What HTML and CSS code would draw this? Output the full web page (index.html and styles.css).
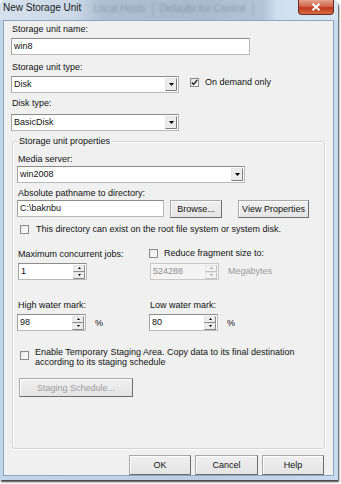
FILE: index.html
```html
<!DOCTYPE html>
<html>
<head>
<meta charset="utf-8">
<link rel="stylesheet" href="styles.css">
</head>
<body>
<div class="window">
  <div class="titlebar">
    <span class="title">New Storage Unit</span>
    <span class="ghost">
      <span class="ghost-tab">Local Hosts</span>
      <span class="ghost-tab">Defaults for Central</span>
    </span>
    <span class="close">
      <svg width="10" height="8" viewBox="0 0 10 8"><path d="M1.5 0.8 L8.5 7.2 M8.5 0.8 L1.5 7.2" stroke="#fff" stroke-width="2"/></svg>
    </span>
  </div>
  <div class="client">
    <div class="lbl l-name">Storage unit name:</div>
    <div class="input in-name">win8</div>
    <div class="lbl l-type">Storage unit type:</div>
    <div class="row r-type">
      <div class="combo cb-type"><span class="val">Disk</span><span class="drop"><svg width="5" height="3" viewBox="0 0 5 3"><path d="M0 0H5L2.5 3Z" fill="#000"/></svg></span></div>
      <div class="check c-demand"><span class="box"><svg width="7" height="7" viewBox="0 0 7 7"><path d="M0.8 3.4 L2.7 5.4 L6.2 1" stroke="#222" stroke-width="1.4" fill="none"/></svg></span><span>On demand only</span></div>
    </div>
    <div class="lbl l-disk">Disk type:</div>
    <div class="combo cb-disk"><span class="val">BasicDisk</span><span class="drop"><svg width="5" height="3" viewBox="0 0 5 3"><path d="M0 0H5L2.5 3Z" fill="#000"/></svg></span></div>

    <div class="group">
      <span class="legend">Storage unit properties</span>
      <div class="lbl g-media">Media server:</div>
      <div class="combo cb-media"><span class="val">win2008</span><span class="drop"><svg width="5" height="3" viewBox="0 0 5 3"><path d="M0 0H5L2.5 3Z" fill="#000"/></svg></span></div>
      <div class="lbl g-path">Absolute pathname to directory:</div>
      <div class="row r-path">
        <div class="input in-path">C:\baknbu</div>
        <div class="btn b-browse">Browse...</div>
        <div class="btn b-view">View Properties</div>
      </div>
      <div class="check c-root"><span class="box"></span><span>This directory can exist on the root file system or system disk.</span></div>

      <div class="grid g-jobs">
        <div class="lbl">Maximum concurrent jobs:</div>
        <div class="check c-frag"><span class="box"></span><span>Reduce fragment size to:</span></div>
        <div class="spin"><span class="val">1</span><span class="arrows"><span class="ar"><svg width="3" height="2" viewBox="0 0 3 2"><path d="M0 2H3L1.5 0Z" fill="#000"/></svg></span><span class="ar"><svg width="3" height="2" viewBox="0 0 3 2"><path d="M0 0H3L1.5 2Z" fill="#000"/></svg></span></span></div>
        <div class="spin-row"><div class="spin disabled"><span class="val">524288</span><span class="arrows"><span class="ar"><svg width="3" height="2" viewBox="0 0 3 2"><path d="M0 2H3L1.5 0Z" fill="#a0a0a0"/></svg></span><span class="ar"><svg width="3" height="2" viewBox="0 0 3 2"><path d="M0 0H3L1.5 2Z" fill="#a0a0a0"/></svg></span></span></div><span class="unit dim">Megabytes</span></div>
      </div>

      <div class="grid g-water">
        <div class="lbl">High water mark:</div>
        <div class="lbl">Low water mark:</div>
        <div class="spin-row"><div class="spin"><span class="val">98</span><span class="arrows"><span class="ar"><svg width="3" height="2" viewBox="0 0 3 2"><path d="M0 2H3L1.5 0Z" fill="#000"/></svg></span><span class="ar"><svg width="3" height="2" viewBox="0 0 3 2"><path d="M0 0H3L1.5 2Z" fill="#000"/></svg></span></span></div><span class="unit pct">%</span></div>
        <div class="spin-row"><div class="spin"><span class="val">80</span><span class="arrows"><span class="ar"><svg width="3" height="2" viewBox="0 0 3 2"><path d="M0 2H3L1.5 0Z" fill="#000"/></svg></span><span class="ar"><svg width="3" height="2" viewBox="0 0 3 2"><path d="M0 0H3L1.5 2Z" fill="#000"/></svg></span></span></div><span class="unit pct">%</span></div>
      </div>

      <div class="check c-stage"><span class="box"></span><span>Enable Temporary Staging Area. Copy data to its final destination according to its staging schedule</span></div>
      <div class="btn b-stage disabled">Staging Schedule...</div>
    </div>

    <div class="actions">
      <div class="btn b-ok">OK</div>
      <div class="btn b-cancel">Cancel</div>
      <div class="btn b-help">Help</div>
    </div>
  </div>
</div>
</body>
</html>
```
FILE: styles.css
```css
html, body {
  margin: 0;
  padding: 0;
  background: #ffffff;
}
body {
  width: 341px;
  height: 484px;
  overflow: hidden;
  font-family: "Liberation Sans", Arial, sans-serif;
  font-size: 9px;
  color: #111;
}
.window {
  width: 338px;
  height: 480px;
  box-sizing: border-box;
  background: linear-gradient(90deg, #c2d4e8 0%, #bccfe3 60%, #c9dbee 100%);
  box-shadow: 1px 2px 2px rgba(0,0,0,0.75);
  display: flex;
  flex-direction: column;
  border-radius: 5px 5px 0 0;
}
.titlebar {
  height: 20px;
  display: flex;
  align-items: flex-start;
  padding-left: 3px;
  background: linear-gradient(90deg, #d5e1ee 0%, #cad8e7 22%, #aebfd2 30%, #a9bbcf 60%, #b3c5d9 78%, #cfdfef 82%, #d8e6f3 100%);
  border-radius: 5px 5px 0 0;
  flex-shrink: 0;
}
.title {
  font-size: 10px;
  line-height: 10px;
  margin-top: 3px;
  color: #1b1b1b;
  white-space: nowrap;
}
.ghost {
  display: flex;
  margin-left: 6px;
  margin-top: 2px;
  filter: blur(1.2px);
  opacity: 0.45;
}
.ghost-tab {
  font-size: 10px;
  line-height: 14px;
  color: #5c6f88;
  padding: 0 6px;
  border-right: 2px solid #8fa3ba;
  white-space: nowrap;
}
.close {
  margin-left: auto;
  margin-right: 4px;
  width: 36px;
  height: 15px;
  box-sizing: border-box;
  border: 1px solid #6b2b22;
  border-top: none;
  border-radius: 0 0 4px 4px;
  background: linear-gradient(#e3a48e 0%, #d2664c 45%, #c1391d 55%, #d36c45 100%);
  display: flex;
  align-items: center;
  justify-content: center;
}
.client {
  margin: 0 4px 0 3px;
  height: 456px;
  box-sizing: border-box;
  border: 1px solid #8fa4bd;
  background: #f0f0f0;
  padding: 0 9px 0 7px;
  display: flex;
  flex-direction: column;
  align-items: flex-start;
}
.lbl {
  height: 11px;
  line-height: 11px;
  white-space: nowrap;
  margin-left: 1px;
}
.l-name { margin-top: 3px; }
.in-name { margin-top: 3px; width: 239px; }
.l-type { margin-top: 7px; }
.r-type { margin-top: 3px; }
.l-disk { margin-top: 5px; }
.cb-disk { margin-top: 5px; }

.row {
  display: flex;
  align-items: flex-start;
}
.input, .combo, .spin {
  height: 17px;
  box-sizing: border-box;
  border: 1px solid #b9b9b9;
  border-top-color: #8c8c8c;
  border-left-color: #a3a3a3;
  background: #fff;
  line-height: 15px;
  padding-left: 2px;
  white-space: nowrap;
}
.combo {
  display: flex;
  align-items: center;
  justify-content: space-between;
  padding-right: 1px;
}
.combo .val, .spin .val { line-height: 15px; }
.drop {
  width: 12px;
  height: 13px;
  box-sizing: border-box;
  border: 1px solid #e6e6e6;
  border-right-color: #7d7d7d;
  border-bottom-color: #7d7d7d;
  background: #ececec;
  display: flex;
  align-items: center;
  justify-content: center;
}
.cb-type { width: 168px; }
.cb-disk { width: 168px; }
.check {
  display: flex;
  align-items: center;
  white-space: nowrap;
  line-height: 11px;
}
.box {
  width: 9px;
  height: 9px;
  box-sizing: border-box;
  border: 1px solid #8a8a8a;
  background: linear-gradient(135deg, #e6e6e6, #ffffff);
  display: flex;
  align-items: center;
  justify-content: center;
  flex-shrink: 0;
  margin-right: 6px;
}
.c-demand {
  margin-left: 11px;
  margin-top: 1px;
}
.c-demand .box { margin-right: 6px; }

.group {
  position: relative;
  margin-top: 10px;
  margin-left: 1px;
  width: 313px;
  height: 308px;
  box-sizing: border-box;
  border: 1px solid #d3d3d3;
  border-radius: 3px;
  box-shadow: inset 1px 1px 0 #fff, 1px 1px 0 #fff;
  padding: 0 0 0 4px;
  display: flex;
  flex-direction: column;
  align-items: flex-start;
}
.legend {
  position: absolute;
  top: -6px;
  left: 4px;
  padding: 0 2px;
  background: #f0f0f0;
  line-height: 11px;
  white-space: nowrap;
}
.g-media { margin-top: 12px; }
.cb-media { margin-top: 1px; width: 228px; }
.g-path { margin-top: 5px; }
.r-path { margin-top: 1px; height: 18px; }
.in-path { width: 147px; }
.btn {
  height: 18px;
  box-sizing: border-box;
  border: 1px solid #a9a9a9;
  border-right-color: #6c6c6c;
  border-bottom-color: #6c6c6c;
  box-shadow: inset 1px 1px 0 #fcfcfc;
  background: linear-gradient(#f0f0f0, #e4e4e4);
  display: flex;
  align-items: center;
  justify-content: center;
  white-space: nowrap;
  color: #111;
}
.b-browse { width: 52px; margin-left: 6px; }
.b-view { width: 71px; margin-left: 16px; }
.c-root { margin-top: 6px; margin-left: 3px; }
.c-root .box { margin-right: 7px; }

.grid {
  display: grid;
  grid-template-columns: 132px 160px;
  align-items: start;
}
.g-jobs { margin-top: 13px; row-gap: 3px; }
.g-jobs .lbl { margin-top: 1px; }
.c-frag .box { margin-right: 6px; }
.spin {
  width: 69px;
  display: flex;
  justify-content: space-between;
  padding-right: 1px;
  margin-left: 1px;
}
.arrows {
  width: 12px;
  display: flex;
  flex-direction: column;
  justify-content: center;
}
.ar {
  height: 7px;
  box-sizing: border-box;
  border: 1px solid #e4e4e4;
  border-right-color: #8a8a8a;
  border-bottom-color: #8a8a8a;
  background: #ececec;
  display: flex;
  align-items: center;
  justify-content: center;
}
.spin.disabled {
  background: #f4f4f4;
  border-color: #c8c8c8;
  color: #8d8d8d;
}
.spin.disabled .ar { border-right-color: #c4c4c4; border-bottom-color: #c4c4c4; background: #f2f2f2; }
.spin-row {
  display: flex;
  align-items: center;
}
.spin-row .spin { margin-left: 0; }
.g-jobs .spin-row .spin { margin-left: 1px; }
.unit { margin-left: 9px; line-height: 11px; }
.dim { color: #9a9a9a; }
.pct { margin-left: 9px; margin-top: 2px; }
.g-water { margin-top: 20px; row-gap: 3px; }
.g-water .spin-row:first-of-type .spin { margin-left: 1px; }
.c-stage {
  margin-top: 16px;
  margin-left: 3px;
  align-items: flex-start;
  white-space: normal;
  width: 290px;
  line-height: 10px;
}
.c-stage .box { margin-top: 4px; margin-right: 6px; }
.b-stage {
  margin-top: 11px;
  margin-left: 2px;
  width: 114px;
  height: 19px;
}
.btn.disabled { color: #9d9d9d; }

.actions {
  margin-top: 6px;
  align-self: flex-end;
  display: flex;
  gap: 4px;
}
.actions .btn { height: 20px; }
.b-ok { width: 62px; }
.b-cancel { width: 63px; }
.b-help { width: 62px; }
```
